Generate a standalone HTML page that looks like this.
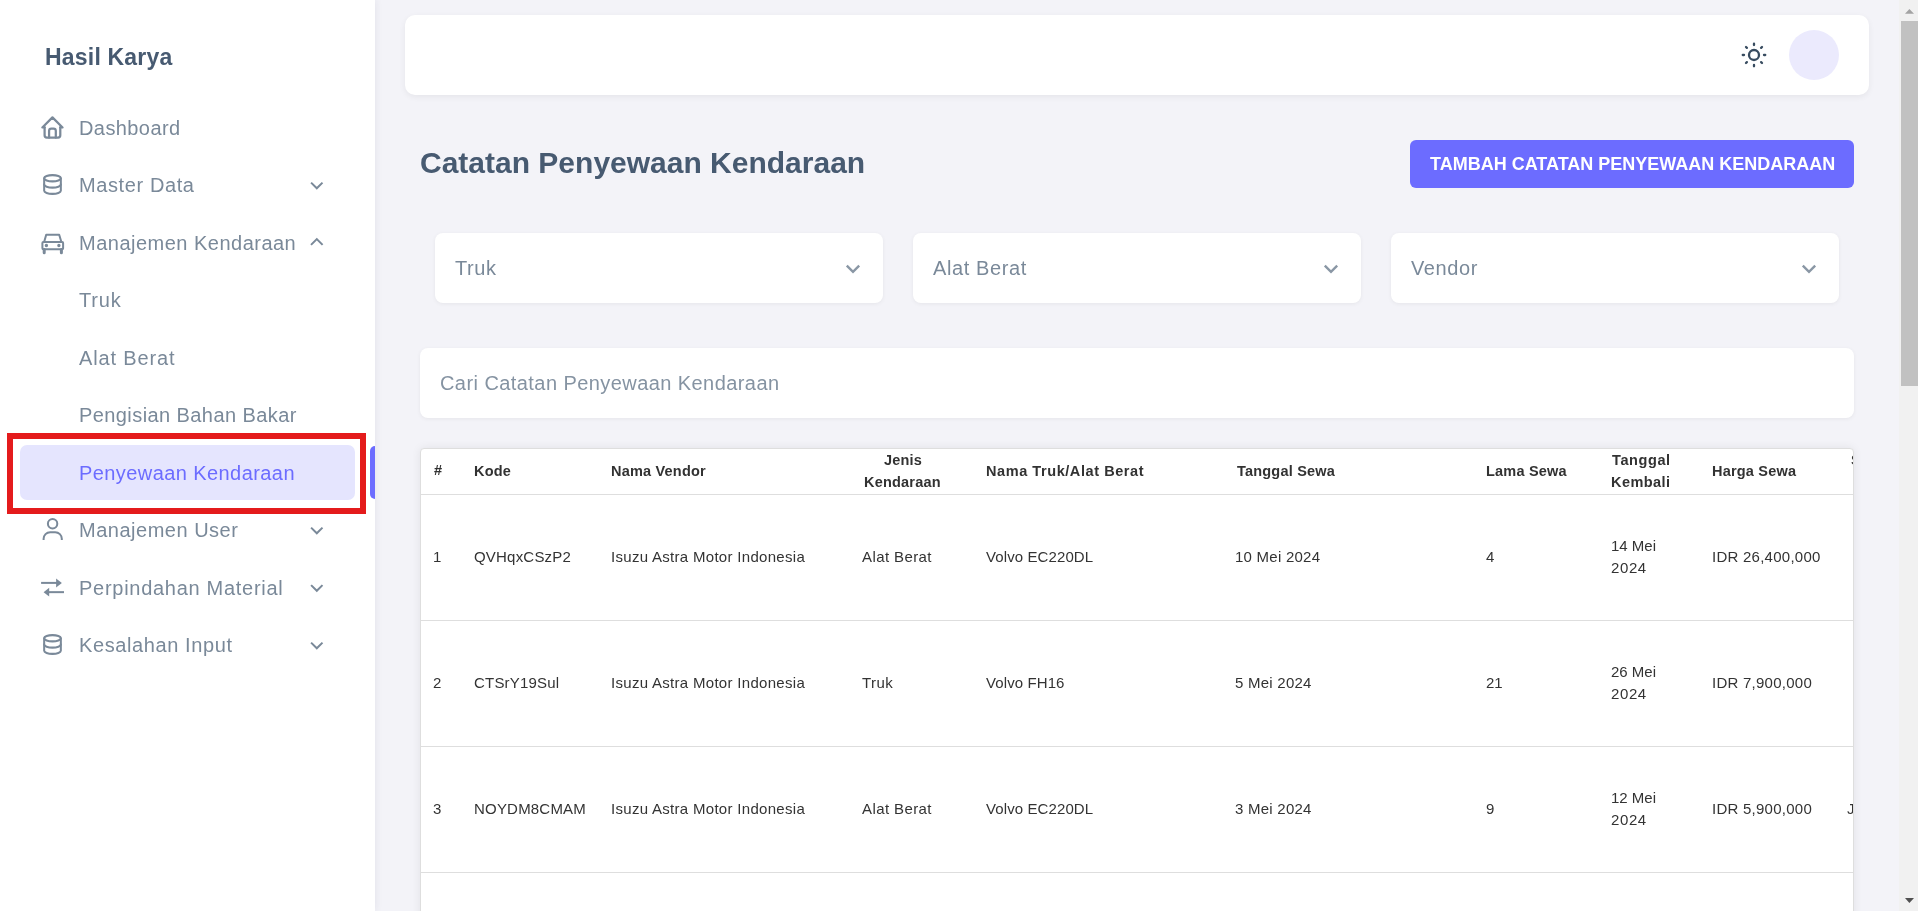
<!DOCTYPE html><html><head><meta charset="utf-8"><style>
html,body{margin:0;padding:0;}
body{width:1918px;height:911px;overflow:hidden;position:relative;background:#f3f3f8;font-family:"Liberation Sans",sans-serif;}
.t{position:absolute;line-height:1;white-space:nowrap;will-change:transform;}
.abs{position:absolute;}
svg{position:absolute;overflow:visible;}
</style></head><body>
<div class="abs" style="left:0;top:0;width:375px;height:911px;background:#fff;box-shadow:1px 0 7px rgba(40,40,80,0.07);"></div>
<div class="t" style="left:44.5px;top:45.55px;font-size:23px;color:#475a71;font-weight:bold;letter-spacing:0.2px;">Hasil Karya</div>
<div class="abs" style="left:20px;top:445px;width:335px;height:55px;background:#e5e5fe;border-radius:7px;"></div>
<div class="abs" style="left:370px;top:446px;width:5px;height:53px;background:#6c6cff;border-radius:5px 0 0 5px;"></div>
<div class="t" style="left:78.6px;top:117.75px;font-size:20px;color:#7a8999;font-weight:normal;letter-spacing:0.41px;">Dashboard</div>
<div class="t" style="left:78.6px;top:175.25px;font-size:20px;color:#7a8999;font-weight:normal;letter-spacing:0.6px;">Master Data</div>
<div class="t" style="left:78.6px;top:232.75px;font-size:20px;color:#7a8999;font-weight:normal;letter-spacing:0.49px;">Manajemen Kendaraan</div>
<div class="t" style="left:78.6px;top:290.25px;font-size:20px;color:#7a8999;font-weight:normal;letter-spacing:0.83px;">Truk</div>
<div class="t" style="left:78.6px;top:347.75px;font-size:20px;color:#7a8999;font-weight:normal;letter-spacing:0.86px;">Alat Berat</div>
<div class="t" style="left:78.6px;top:405.25px;font-size:20px;color:#7a8999;font-weight:normal;letter-spacing:0.415px;">Pengisian Bahan Bakar</div>
<div class="t" style="left:78.6px;top:462.75px;font-size:20px;color:#6c6cff;font-weight:normal;letter-spacing:0.42px;">Penyewaan Kendaraan</div>
<div class="t" style="left:78.6px;top:520.25px;font-size:20px;color:#7a8999;font-weight:normal;letter-spacing:0.51px;">Manajemen User</div>
<div class="t" style="left:78.6px;top:577.75px;font-size:20px;color:#7a8999;font-weight:normal;letter-spacing:0.72px;">Perpindahan Material</div>
<div class="t" style="left:78.6px;top:635.25px;font-size:20px;color:#7a8999;font-weight:normal;letter-spacing:0.6px;">Kesalahan Input</div>
<svg width="26.9" height="26.9" viewBox="0 0 24 24" style="left:39.2px;top:113.8px" fill="none" stroke="#7a8999" stroke-width="2" stroke-linecap="round" stroke-linejoin="round"><path d="M5 12l-2 0l9 -9l9 9l-2 0"/><path d="M5 12v7a2 2 0 0 0 2 2h10a2 2 0 0 0 2 -2v-7"/><path d="M9 21v-6a2 2 0 0 1 2 -2h2a2 2 0 0 1 2 2v6"/></svg>
<svg width="25" height="25" viewBox="0 0 24 24" style="left:40.25px;top:171.9px" fill="none" stroke="#7a8999" stroke-width="1.95" stroke-linecap="round" stroke-linejoin="round"><path d="M4 6a8 3 0 1 0 16 0a8 3 0 1 0 -16 0"/><path d="M4 6v6a8 3 0 0 0 16 0v-6"/><path d="M4 12v6a8 3 0 0 0 16 0v-6"/></svg>
<svg width="25" height="25" viewBox="0 0 24 24" style="left:40.25px;top:632.4px" fill="none" stroke="#7a8999" stroke-width="1.95" stroke-linecap="round" stroke-linejoin="round"><path d="M4 6a8 3 0 1 0 16 0a8 3 0 1 0 -16 0"/><path d="M4 6v6a8 3 0 0 0 16 0v-6"/><path d="M4 12v6a8 3 0 0 0 16 0v-6"/></svg>
<svg width="30" height="30" viewBox="38 228 30 30" style="left:38px;top:228px" fill="none" stroke="#7a8999" stroke-width="2" stroke-linejoin="round">
<path d="M44.2 241.8 L46.2 234.8 H59.2 L61.3 241.8"/>
<rect x="42.4" y="241.9" width="20.7" height="7.4" rx="1"/>
<path d="M44.2 249.5 V252.8 M61.4 249.5 V252.8" stroke-width="3" stroke-linecap="round"/>
<circle cx="46.4" cy="245.5" r="0.9" stroke-width="1.6"/>
<circle cx="58.9" cy="245.5" r="0.9" stroke-width="1.6"/>
</svg>
<svg width="30" height="30" viewBox="38 514 30 30" style="left:38px;top:514px" fill="none" stroke="#7a8999" stroke-width="2">
<circle cx="52.6" cy="523.8" r="4.7"/>
<path d="M43.6 540 v-1.2 a6.6 6.6 0 0 1 6.6 -6.6 h5 a6.6 6.6 0 0 1 6.6 6.6 v1.2"/>
</svg>
<svg width="30" height="30" viewBox="38 572 30 30" style="left:38px;top:572px" fill="#7a8999" stroke="none">
<rect x="41.1" y="581.9" width="16" height="2"/>
<path d="M56.1 578.5 L61.9 582.9 L56.1 587.5 Z"/>
<rect x="48.5" y="591.15" width="15.5" height="2"/>
<path d="M49.2 587.7 L43.6 592.15 L49.2 596.6 Z"/>
</svg>
<svg width="1" height="1" viewBox="0 0 1 1" style="left:0;top:0" fill="none" stroke="#7a8999" stroke-width="2"><path d="M311.1 182.60000000000002 L316.8 188.3 L322.5 182.60000000000002"/></svg>
<svg width="1" height="1" viewBox="0 0 1 1" style="left:0;top:0" fill="none" stroke="#7a8999" stroke-width="2"><path d="M311.1 527.5999999999999 L316.8 533.3 L322.5 527.5999999999999"/></svg>
<svg width="1" height="1" viewBox="0 0 1 1" style="left:0;top:0" fill="none" stroke="#7a8999" stroke-width="2"><path d="M311.1 585.0999999999999 L316.8 590.8 L322.5 585.0999999999999"/></svg>
<svg width="1" height="1" viewBox="0 0 1 1" style="left:0;top:0" fill="none" stroke="#7a8999" stroke-width="2"><path d="M311.1 642.5999999999999 L316.8 648.3 L322.5 642.5999999999999"/></svg>
<svg width="1" height="1" viewBox="0 0 1 1" style="left:0;top:0" fill="none" stroke="#7a8999" stroke-width="2"><path d="M311.0 244.9 L316.8 239.1 L322.6 244.9"/></svg>
<div class="abs" style="left:7px;top:433px;width:347px;height:69px;border:6px solid #e41b1c;"></div>
<div class="abs" style="left:405px;top:15px;width:1464px;height:80px;background:#fff;border-radius:10px;box-shadow:0 2px 6px rgba(0,0,0,0.06);"></div>
<svg width="30" height="30" viewBox="0 0 24 24" style="left:1739px;top:40px" fill="none" stroke="#374b5f" stroke-width="1.85" stroke-linecap="round" stroke-linejoin="round"><path d="M8 12a4 4 0 1 0 8 0a4 4 0 1 0 -8 0"/><path d="M3 12h1m8 -9v1m8 8h1m-9 8v1m-6.4 -15.4l.7 .7m12.1 -.7l-.7 .7m0 11.4l.7 .7m-12.1 -.7l-.7 .7"/></svg>
<div class="abs" style="left:1789px;top:30px;width:50px;height:50px;border-radius:50%;background:#ebeafd;"></div>
<div class="t" style="left:420px;top:147.50px;font-size:30px;color:#475a71;font-weight:bold;letter-spacing:0px;">Catatan Penyewaan Kendaraan</div>
<div class="abs" style="left:1410px;top:140px;width:444px;height:48px;background:#6c6cff;border-radius:6px;"></div>
<div class="t" style="left:1430px;top:155.20px;font-size:18px;color:#fff;font-weight:bold;letter-spacing:0px;">TAMBAH CATATAN PENYEWAAN KENDARAAN</div>
<div class="abs" style="left:435px;top:233px;width:448px;height:70px;background:#fff;border-radius:8px;box-shadow:0 1px 4px rgba(0,0,0,0.06);"></div>
<div class="t" style="left:454.8px;top:258.40px;font-size:20px;color:#7a8999;font-weight:normal;letter-spacing:0.6px;">Truk</div>
<svg width="1" height="1" viewBox="0 0 1 1" style="left:0;top:0" fill="none" stroke="#8a97a5" stroke-width="2.4"><path d="M846.8 265.6 L853 271.8 L859.2 265.6"/></svg>
<div class="abs" style="left:913px;top:233px;width:448px;height:70px;background:#fff;border-radius:8px;box-shadow:0 1px 4px rgba(0,0,0,0.06);"></div>
<div class="t" style="left:932.8px;top:258.40px;font-size:20px;color:#7a8999;font-weight:normal;letter-spacing:0.6px;">Alat Berat</div>
<svg width="1" height="1" viewBox="0 0 1 1" style="left:0;top:0" fill="none" stroke="#8a97a5" stroke-width="2.4"><path d="M1324.8 265.6 L1331 271.8 L1337.2 265.6"/></svg>
<div class="abs" style="left:1391px;top:233px;width:448px;height:70px;background:#fff;border-radius:8px;box-shadow:0 1px 4px rgba(0,0,0,0.06);"></div>
<div class="t" style="left:1410.8px;top:258.40px;font-size:20px;color:#7a8999;font-weight:normal;letter-spacing:0.6px;">Vendor</div>
<svg width="1" height="1" viewBox="0 0 1 1" style="left:0;top:0" fill="none" stroke="#8a97a5" stroke-width="2.4"><path d="M1802.8 265.6 L1809 271.8 L1815.2 265.6"/></svg>
<div class="abs" style="left:420px;top:348px;width:1434px;height:70px;background:#fff;border-radius:8px;box-shadow:0 1px 4px rgba(0,0,0,0.06);"></div>
<div class="t" style="left:439.5px;top:372.80px;font-size:20px;color:#8593a2;font-weight:normal;letter-spacing:0.43px;">Cari Catatan Penyewaan Kendaraan</div>
<div class="abs" style="left:420px;top:448px;width:1432px;height:470px;background:#fff;border-radius:4px;border:1px solid #dedede;box-shadow:0 0 10px rgba(0,0,0,0.075);overflow:hidden;"></div>
<div class="abs" style="left:421px;top:494px;width:1432px;height:1px;background:#dedede;"></div>
<div class="abs" style="left:421px;top:620px;width:1432px;height:1px;background:#dedede;"></div>
<div class="abs" style="left:421px;top:746px;width:1432px;height:1px;background:#dedede;"></div>
<div class="abs" style="left:421px;top:872px;width:1432px;height:1px;background:#dedede;"></div>
<div class="abs" style="left:421px;top:449px;width:1432px;height:462px;overflow:hidden;">
<div class="t" style="left:13px;top:14.07px;font-size:14.5px;color:#323232;font-weight:bold;letter-spacing:0.2px;">#</div>
<div class="t" style="left:52.5px;top:14.68px;font-size:14.5px;color:#323232;font-weight:bold;letter-spacing:0.2px;">Kode</div>
<div class="t" style="left:189.5px;top:14.68px;font-size:14.5px;color:#323232;font-weight:bold;letter-spacing:0.2px;">Nama Vendor</div>
<div class="t" style="left:463px;top:3.68px;font-size:14.5px;color:#323232;font-weight:bold;letter-spacing:0.2px;">Jenis</div>
<div class="t" style="left:442.5px;top:25.68px;font-size:14.5px;color:#323232;font-weight:bold;letter-spacing:0.2px;">Kendaraan</div>
<div class="t" style="left:564.5px;top:14.68px;font-size:14.5px;color:#323232;font-weight:bold;letter-spacing:0.57px;">Nama Truk/Alat Berat</div>
<div class="t" style="left:815.5px;top:14.68px;font-size:14.5px;color:#323232;font-weight:bold;letter-spacing:0.2px;">Tanggal Sewa</div>
<div class="t" style="left:1065px;top:14.68px;font-size:14.5px;color:#323232;font-weight:bold;letter-spacing:0.2px;">Lama Sewa</div>
<div class="t" style="left:1190.5px;top:3.68px;font-size:14.5px;color:#323232;font-weight:bold;letter-spacing:0.6px;">Tanggal</div>
<div class="t" style="left:1190px;top:25.68px;font-size:14.5px;color:#323232;font-weight:bold;letter-spacing:0.45px;">Kembali</div>
<div class="t" style="left:1290.5px;top:14.68px;font-size:14.5px;color:#323232;font-weight:bold;letter-spacing:0.2px;">Harga Sewa</div>
<div class="t" style="left:1429.5px;top:3.68px;font-size:14.5px;color:#323232;font-weight:bold;letter-spacing:0.2px;">Status</div>
<div class="t" style="left:11.5px;top:99.95px;font-size:15px;color:#333333;font-weight:normal;letter-spacing:0px;">1</div>
<div class="t" style="left:52.5px;top:99.95px;font-size:15px;color:#333333;font-weight:normal;letter-spacing:0.2px;">QVHqxCSzP2</div>
<div class="t" style="left:189.5px;top:99.95px;font-size:15px;color:#333333;font-weight:normal;letter-spacing:0.3px;">Isuzu Astra Motor Indonesia</div>
<div class="t" style="left:440.5px;top:99.95px;font-size:15px;color:#333333;font-weight:normal;letter-spacing:0.4px;">Alat Berat</div>
<div class="t" style="left:565px;top:99.95px;font-size:15px;color:#333333;font-weight:normal;letter-spacing:0.1px;">Volvo EC220DL</div>
<div class="t" style="left:814.3px;top:99.95px;font-size:15px;color:#333333;font-weight:normal;letter-spacing:0.25px;">10 Mei 2024</div>
<div class="t" style="left:1064.8px;top:99.95px;font-size:15px;color:#333333;font-weight:normal;letter-spacing:0px;">4</div>
<div class="t" style="left:1189.5px;top:89.05px;font-size:15px;color:#333333;font-weight:normal;letter-spacing:0px;">14 Mei</div>
<div class="t" style="left:1189.5px;top:110.85px;font-size:15px;color:#333333;font-weight:normal;letter-spacing:0.6px;">2024</div>
<div class="t" style="left:1290.5px;top:99.95px;font-size:15px;color:#333333;font-weight:normal;letter-spacing:0.25px;">IDR 26,400,000</div>
<div class="t" style="left:11.5px;top:225.95px;font-size:15px;color:#333333;font-weight:normal;letter-spacing:0px;">2</div>
<div class="t" style="left:52.5px;top:225.95px;font-size:15px;color:#333333;font-weight:normal;letter-spacing:0.2px;">CTSrY19Sul</div>
<div class="t" style="left:189.5px;top:225.95px;font-size:15px;color:#333333;font-weight:normal;letter-spacing:0.3px;">Isuzu Astra Motor Indonesia</div>
<div class="t" style="left:440.5px;top:225.95px;font-size:15px;color:#333333;font-weight:normal;letter-spacing:0.4px;">Truk</div>
<div class="t" style="left:565px;top:225.95px;font-size:15px;color:#333333;font-weight:normal;letter-spacing:0.1px;">Volvo FH16</div>
<div class="t" style="left:814.3px;top:225.95px;font-size:15px;color:#333333;font-weight:normal;letter-spacing:0.25px;">5 Mei 2024</div>
<div class="t" style="left:1064.8px;top:225.95px;font-size:15px;color:#333333;font-weight:normal;letter-spacing:0px;">21</div>
<div class="t" style="left:1189.5px;top:215.05px;font-size:15px;color:#333333;font-weight:normal;letter-spacing:0px;">26 Mei</div>
<div class="t" style="left:1189.5px;top:236.85px;font-size:15px;color:#333333;font-weight:normal;letter-spacing:0.6px;">2024</div>
<div class="t" style="left:1290.5px;top:225.95px;font-size:15px;color:#333333;font-weight:normal;letter-spacing:0.25px;">IDR 7,900,000</div>
<div class="t" style="left:11.5px;top:351.95px;font-size:15px;color:#333333;font-weight:normal;letter-spacing:0px;">3</div>
<div class="t" style="left:52.5px;top:351.95px;font-size:15px;color:#333333;font-weight:normal;letter-spacing:0.2px;">NOYDM8CMAM</div>
<div class="t" style="left:189.5px;top:351.95px;font-size:15px;color:#333333;font-weight:normal;letter-spacing:0.3px;">Isuzu Astra Motor Indonesia</div>
<div class="t" style="left:440.5px;top:351.95px;font-size:15px;color:#333333;font-weight:normal;letter-spacing:0.4px;">Alat Berat</div>
<div class="t" style="left:565px;top:351.95px;font-size:15px;color:#333333;font-weight:normal;letter-spacing:0.1px;">Volvo EC220DL</div>
<div class="t" style="left:814.3px;top:351.95px;font-size:15px;color:#333333;font-weight:normal;letter-spacing:0.25px;">3 Mei 2024</div>
<div class="t" style="left:1064.8px;top:351.95px;font-size:15px;color:#333333;font-weight:normal;letter-spacing:0px;">9</div>
<div class="t" style="left:1189.5px;top:341.05px;font-size:15px;color:#333333;font-weight:normal;letter-spacing:0px;">12 Mei</div>
<div class="t" style="left:1189.5px;top:362.85px;font-size:15px;color:#333333;font-weight:normal;letter-spacing:0.6px;">2024</div>
<div class="t" style="left:1290.5px;top:351.95px;font-size:15px;color:#333333;font-weight:normal;letter-spacing:0.25px;">IDR 5,900,000</div>
<div class="t" style="left:1426px;top:351.95px;font-size:15px;color:#333333;font-weight:normal;letter-spacing:0px;">Jalan</div>
</div>
<div class="abs" style="left:1899px;top:0;width:19px;height:911px;background:#f1f1f1;"></div>
<div class="abs" style="left:1901px;top:21px;width:17px;height:365px;background:#c1c1c1;"></div>
<svg width="1" height="1" style="left:0;top:0"><path d="M1905 13.8 L1909.4 8.9 L1914 13.8 Z" fill="#a3a3a3"/><path d="M1905 898.1 L1909.4 902.9 L1914 898.1 Z" fill="#505050"/></svg>
</body></html>
